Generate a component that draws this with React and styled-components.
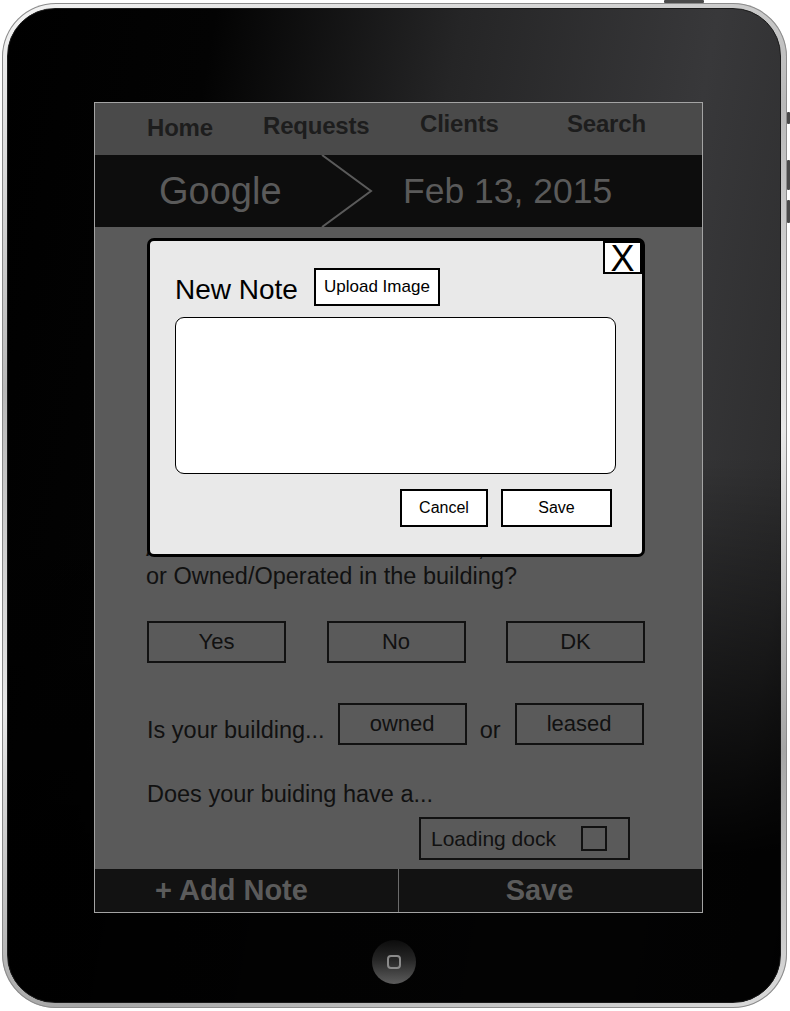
import React from 'react';
import styled, { createGlobalStyle } from 'styled-components';

const GlobalStyle = createGlobalStyle`
  html, body {
    margin: 0;
    padding: 0;
    background: #ffffff;
  }
  body {
    font-family: "Liberation Sans", Arial, sans-serif;
  }
  * {
    box-sizing: border-box;
  }
`;

const Page = styled.div`
  width: 790px;
  height: 1011px;
  padding: 3px 0 0 2px;
  overflow: hidden;
`;

const Device = styled.div`
  position: relative;
  width: 785px;
  height: 1005px;
  padding: 5px 6px 5px 5px;
  border-radius: 54px;
  background: linear-gradient(160deg, #f4f4f4 0%, #b9b9b9 30%, #e8e8e8 55%, #a6a6a6 80%, #dcdcdc 100%);
  box-shadow: inset 0 0 0 1px #8c8c8c;
`;

const SideButton = styled.div`
  position: absolute;
  top: ${p => p.$top}px;
  right: ${p => p.$right}px;
  width: ${p => p.$w}px;
  height: ${p => p.$h}px;
  background: #4a4a4a;
  border-radius: 1px;
`;

const Bezel = styled.div`
  height: 100%;
  border-radius: 48px;
  border: 1px solid #1a1a1a;
  display: flex;
  flex-direction: column;
  background:
    linear-gradient(to bottom, rgba(0, 0, 0, 0) 0%, rgba(0, 0, 0, 0) 45%, rgba(0, 0, 0, 0.95) 85%),
    linear-gradient(100deg, #000 0%, #030303 22%, #252526 48%, #38383a 75%, #2d2d2e 92%, #1a1a1a 100%);
`;

const Screen = styled.div`
  margin: 93px 0 0 86px;
  width: 609px;
  height: 811px;
  border: 1px solid #a4a4a4;
  display: flex;
  flex-direction: column;
  background: #5a5a5a;
`;

const Nav = styled.div`
  height: 52px;
  flex: none;
  background: #4a4a4a;
  display: flex;
  align-items: center;
  padding-left: 52px;
`;

const NavItem = styled.div`
  width: ${p => p.$w}px;
  flex: none;
  font-size: 24px;
  font-weight: 700;
  color: #1d1d1d;
  transform: translateY(${p => p.$dy}px);
  letter-spacing: -0.2px;
`;

const Crumb = styled.div`
  height: 72px;
  flex: none;
  background: #0d0d0d;
  display: flex;
  align-items: center;
  padding-left: 64px;
  color: #5a5a5a;
`;

const CrumbText = styled.div`
  width: ${p => p.$w || 'auto'};
  flex: none;
  font-size: ${p => p.$fs}px;
  margin-top: 1px;
`;

const Chevron = styled.svg`
  flex: none;
  width: 52px;
  height: 72px;
  margin-right: 30px;
`;

const Content = styled.div`
  position: relative;
  flex: 1;
  padding: 307px 58px 0 51px;
  color: #111;
  font-size: 23.5px;
`;

const Question = styled.div`
  line-height: 28px;
`;

const ChoiceRow = styled.div`
  display: flex;
  justify-content: space-between;
  margin-top: 31px;
  width: 499px;
  padding-left: 1px;
`;

const Choice = styled.div`
  width: ${p => p.$w}px;
  height: 42px;
  flex: none;
  border: 2px solid #111;
  display: flex;
  align-items: center;
  justify-content: center;
  font-size: 22px;
`;

const BuildingRow = styled.div`
  display: flex;
  align-items: flex-end;
  margin-top: 40px;
  height: 42px;
  padding-left: 1px;
`;

const Label = styled.span`
  margin: 0 ${p => p.$mr || 0}px 2px ${p => p.$ml || 0}px;
  line-height: 26px;
`;

const Prompt = styled.div`
  margin-top: 36px;
  line-height: 26px;
  padding-left: 1px;
`;

const DockRow = styled.div`
  display: flex;
  justify-content: flex-end;
  padding-right: 14px;
  margin-top: 10px;
`;

const DockBox = styled.div`
  width: 211px;
  height: 43px;
  border: 2px solid #111;
  display: flex;
  align-items: center;
  padding: 0 21px 0 10px;
  font-size: 21px;
  justify-content: space-between;
`;

const CheckBox = styled.div`
  width: 26px;
  height: 25px;
  border: 2px solid #111;
`;

const Footer = styled.div`
  height: 43px;
  flex: none;
  background: #121212;
  display: flex;
`;

const FooterHalf = styled.div`
  flex: ${p => (p.$w ? `0 0 ${p.$w}px` : '1')};
  display: flex;
  align-items: center;
  justify-content: center;
  padding-right: ${p => p.$pr}px;
  font-size: 29px;
  font-weight: 700;
  color: #5b5b5b;
  border-left: ${p => (p.$divider ? '1px solid #6a6a6a' : 'none')};
`;

const Modal = styled.div`
  position: absolute;
  left: 52px;
  top: 11px;
  width: 498px;
  height: 319px;
  background: #e9e9e9;
  border: 3px solid #000;
  border-radius: 7px;
  padding: 26px 29px 0 25px;
  color: #000;
`;

const CloseBox = styled.div`
  position: absolute;
  top: 0;
  right: 0;
  width: 39px;
  height: 33px;
  background: #fff;
  border: 2px solid #000;
  display: flex;
  align-items: center;
  justify-content: center;
  font-size: 36px;
  font-weight: 400;
  line-height: 1;
  padding-top: 2px;
`;

const ModalHead = styled.div`
  display: flex;
  align-items: center;
  gap: 16px;
`;

const ModalTitle = styled.div`
  font-size: 28px;
  margin-top: 7px;
`;

const BoxButton = styled.div`
  width: ${p => p.$w}px;
  height: 38px;
  background: #fff;
  border: 2px solid #000;
  display: flex;
  align-items: center;
  justify-content: center;
  font-size: ${p => p.$fs || 16}px;
`;

const NoteArea = styled.div`
  margin-top: 11px;
  width: 441px;
  height: 157px;
  background: #fff;
  border: 1px solid #000;
  border-radius: 9px;
`;

const ModalActions = styled.div`
  display: flex;
  justify-content: flex-end;
  gap: 13px;
  margin-top: 15px;
  width: 437px;
`;

const HomeButton = styled.div`
  align-self: center;
  margin-top: 27px;
  width: 44px;
  height: 44px;
  border-radius: 50%;
  background: linear-gradient(to bottom, #0c0c0c 0%, #262626 45%, #5c5c5c 100%);
  display: flex;
  align-items: center;
  justify-content: center;
`;

const HomeGlyph = styled.div`
  width: 14px;
  height: 14px;
  border: 2px solid #8a8a8a;
  border-radius: 4px;
`;

export default function App() {
  return (
    <Page>
      <GlobalStyle />
      <Device>
        <SideButton $top={-3} $right={83} $w={40} $h={3} />
        <SideButton $top={109} $right={-3} $w={3} $h={12} />
        <SideButton $top={157} $right={-3} $w={3} $h={30} />
        <SideButton $top={197} $right={-3} $w={3} $h={23} />
        <Bezel>
          <Screen>
            <Nav>
              <NavItem $w={116} $dy={-1}>Home</NavItem>
              <NavItem $w={157} $dy={-3}>Requests</NavItem>
              <NavItem $w={147} $dy={-5}>Clients</NavItem>
              <NavItem $w={80} $dy={-5}>Search</NavItem>
            </Nav>
            <Crumb>
              <CrumbText $w="162px" $fs={38}>Google</CrumbText>
              <Chevron viewBox="0 0 52 72">
                <polyline points="1,0 50,36 1,72" fill="none" stroke="#5a5a5a" strokeWidth="2" />
              </Chevron>
              <CrumbText $fs={35.5}>Feb 13, 2015</CrumbText>
            </Crumb>
            <Content>
              <Question>
                Are there areas that are Leased, Rented
                <br />
                or Owned/Operated in the building?
              </Question>
              <ChoiceRow>
                <Choice $w={139}>Yes</Choice>
                <Choice $w={139}>No</Choice>
                <Choice $w={139}>DK</Choice>
              </ChoiceRow>
              <BuildingRow>
                <Label $mr={13}>Is your building...</Label>
                <Choice $w={129}>owned</Choice>
                <Label $ml={13} $mr={14}>or</Label>
                <Choice $w={129}>leased</Choice>
              </BuildingRow>
              <Prompt>Does your buiding have a...</Prompt>
              <DockRow>
                <DockBox>
                  Loading dock
                  <CheckBox />
                </DockBox>
              </DockRow>
              <Modal>
                <CloseBox>X</CloseBox>
                <ModalHead>
                  <ModalTitle>New Note</ModalTitle>
                  <BoxButton $w={126} $fs={17}>Upload Image</BoxButton>
                </ModalHead>
                <NoteArea />
                <ModalActions>
                  <BoxButton $w={88}>Cancel</BoxButton>
                  <BoxButton $w={111}>Save</BoxButton>
                </ModalActions>
              </Modal>
            </Content>
            <Footer>
              <FooterHalf $w={303} $pr={30}>+ Add Note</FooterHalf>
              <FooterHalf $pr={22} $divider>Save</FooterHalf>
            </Footer>
          </Screen>
          <HomeButton>
            <HomeGlyph />
          </HomeButton>
        </Bezel>
      </Device>
    </Page>
  );
}
